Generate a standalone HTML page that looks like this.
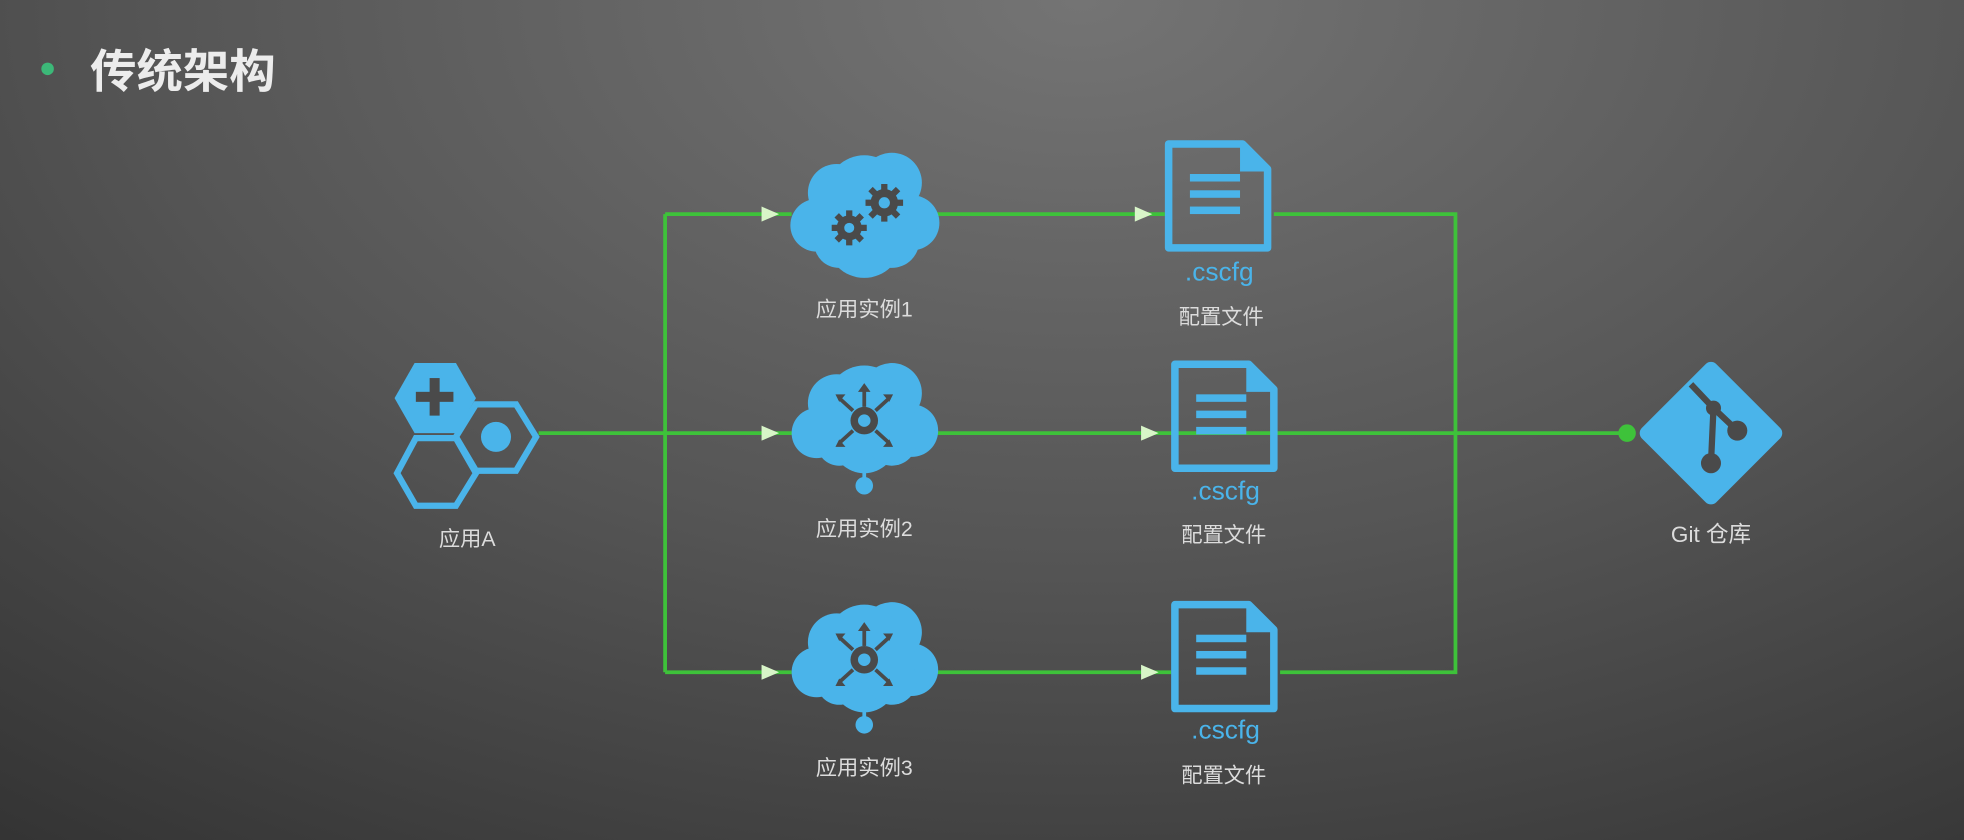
<!DOCTYPE html>
<html><head><meta charset="utf-8"><style>
html,body{margin:0;padding:0;width:1964px;height:840px;overflow:hidden;background:#3a3a3a}
svg{display:block}
text{font-family:"Liberation Sans","Noto Sans CJK SC",sans-serif}
</style></head><body>
<svg width="1964" height="840" viewBox="0 0 1568 671" preserveAspectRatio="none" xmlns="http://www.w3.org/2000/svg">
<defs>
<radialGradient id="bg" cx="0.55" cy="0.0" r="0.95" gradientTransform="scale(1,1.4)">
<stop offset="0" stop-color="#747474"/><stop offset="0.5" stop-color="#555555"/><stop offset="1" stop-color="#303030"/>
</radialGradient>
<g id="cloud" fill="#4ab4ea"><circle cx="-38" cy="8" r="21"/><circle cx="38" cy="6" r="22"/><circle cx="-22" cy="-18" r="23"/><circle cx="22" cy="-26" r="24"/><circle cx="0" cy="-18" r="30"/><circle cx="0" cy="20" r="30"/><circle cx="-20" cy="22" r="20"/><circle cx="22" cy="20" r="22"/><rect x="-40" y="-10" width="80" height="30"/></g>
<g id="cloud2" fill="#4ab4ea"><circle cx="-38" cy="6" r="20"/><circle cx="38" cy="4" r="21"/><circle cx="-22" cy="-18" r="23"/><circle cx="22" cy="-26" r="24"/><circle cx="0" cy="-18" r="30"/><circle cx="0" cy="12" r="26"/><circle cx="-20" cy="14" r="18"/><circle cx="22" cy="12" r="20"/><rect x="-40" y="-10" width="80" height="24"/></g>
<g id="hub"><use href="#cloud2"/><circle cx="0" cy="-4" r="11" fill="#4a4a4a"/><circle cx="0" cy="-4" r="5" fill="#4ab4ea"/>
<g stroke="#4a4a4a" stroke-width="3"><line x1="0" y1="-15" x2="0" y2="-30"/><line x1="-9" y1="-12" x2="-20" y2="-22"/><line x1="9" y1="-12" x2="20" y2="-22"/><line x1="-9" y1="4" x2="-20" y2="14"/><line x1="9" y1="4" x2="20" y2="14"/></g>
<path d="M0-34 l-5 7 h10z M-23-25 l8 0 l-5 6z M23-25 l-8 0 l5 6z M-23 17 l8 0 l-5 -6z M23 17 l-8 0 l5 -6z" fill="#4a4a4a"/>
<line x1="0" y1="30" x2="0" y2="46" stroke="#4ab4ea" stroke-width="3"/><circle cx="0" cy="48" r="7" fill="#4ab4ea"/></g>
<g id="doc"><path d="M3 3 H62 L82 23 V86 H3 Z" fill="none" stroke="#4ab4ea" stroke-width="6" stroke-linejoin="round"/>
<path d="M60 3 V25 H82" fill="#4ab4ea"/>
<rect x="20" y="27" width="40" height="6" fill="#4ab4ea"/><rect x="20" y="40" width="40" height="6" fill="#4ab4ea"/><rect x="20" y="53" width="40" height="6" fill="#4ab4ea"/></g>
<g id="arr"><path d="M0 -6 L14 0 L0 6Z" fill="#d8f5c8"/></g>
</defs>
<rect width="1568" height="671" fill="url(#bg)"/>
<circle cx="38" cy="55" r="5" fill="#3cb878"/>
<text x="72" y="70" font-size="37" font-weight="bold" fill="#ececec">传统架构</text>

<g stroke="#3ec23a" stroke-width="3" fill="none">
<path d="M430 346 H1298"/>
<path d="M531 171 V537"/>
<path d="M531 171 H632 M531 537 H632"/>
<path d="M748 171 H930 M748 537 H935"/>
<path d="M1017 171 H1162 V537 H1022"/>
</g>
<use href="#arr" x="608" y="171"/><use href="#arr" x="608" y="346"/><use href="#arr" x="608" y="537"/>
<use href="#arr" x="906" y="171"/><use href="#arr" x="911" y="346"/><use href="#arr" x="911" y="537"/>
<circle cx="1299" cy="346" r="7" fill="#3ec23a"/>

<g fill="none" stroke="#4ab4ea" stroke-width="5">
<polygon points="332,350 364,350 380,378 364,404 332,404 317,378" />
<polygon points="380,323 412,323 428,349 412,376 380,376 364,349"/>
</g>
<polygon points="331,290 364,290 380,318 364,346 331,346 315,318" fill="#4ab4ea"/>
<rect x="343" y="302" width="8" height="30" fill="#4a4a4a"/><rect x="332" y="313" width="30" height="8" fill="#4a4a4a"/>
<circle cx="396" cy="349" r="12" fill="#4ab4ea"/>
<text x="373" y="436" font-size="17" fill="#dcdcdc" text-anchor="middle">应用A</text>

<g transform="translate(690,172)"><use href="#cloud"/>
<g fill="#4a4a4a"><circle cx="-12" cy="10" r="10"/><circle cx="16" cy="-10" r="11"/>
<g stroke="#4a4a4a" stroke-width="5"><path d="M-12 -4 V24 M-26 10 H2 M-22 0 L-2 20 M-22 20 L-2 0"/><path d="M16 -25 V5 M1 -10 H31 M5 -21 L27 1 M5 1 L27 -21"/></g></g>
<circle cx="-12" cy="10" r="4" fill="#4ab4ea"/><circle cx="16" cy="-10" r="4.5" fill="#4ab4ea"/></g>
<g transform="translate(690,340)"><use href="#hub"/></g>
<g transform="translate(690,531)"><use href="#hub"/></g>
<text x="690" y="253" font-size="17" fill="#dcdcdc" text-anchor="middle">应用实例1</text>
<text x="690" y="428" font-size="17" fill="#dcdcdc" text-anchor="middle">应用实例2</text>
<text x="690" y="619" font-size="17" fill="#dcdcdc" text-anchor="middle">应用实例3</text>

<use href="#doc" x="930" y="112"/><use href="#doc" x="935" y="288"/><use href="#doc" x="935" y="480"/>
<g font-size="21" fill="#4ab4ea"><text x="946" y="224">.cscfg</text><text x="951" y="399">.cscfg</text><text x="951" y="590">.cscfg</text></g>
<g font-size="17" fill="#dcdcdc" text-anchor="middle"><text x="975" y="259">配置文件</text><text x="977" y="433">配置文件</text><text x="977" y="625">配置文件</text></g>

<rect x="1324" y="304" width="84" height="84" rx="6" fill="#4ab4ea" transform="rotate(45 1366 346)"/>
<g stroke="#4a4a4a" stroke-width="5" fill="none"><path d="M1350 307 L1368 326 L1387 344 M1368 326 L1366 370"/></g>
<g fill="#4a4a4a"><circle cx="1368" cy="326" r="6"/><circle cx="1387" cy="344" r="8"/><circle cx="1366" cy="370" r="8"/></g>
<text x="1366" y="433" font-size="18" fill="#dcdcdc" text-anchor="middle">Git 仓库</text>
</svg>
</body></html>
